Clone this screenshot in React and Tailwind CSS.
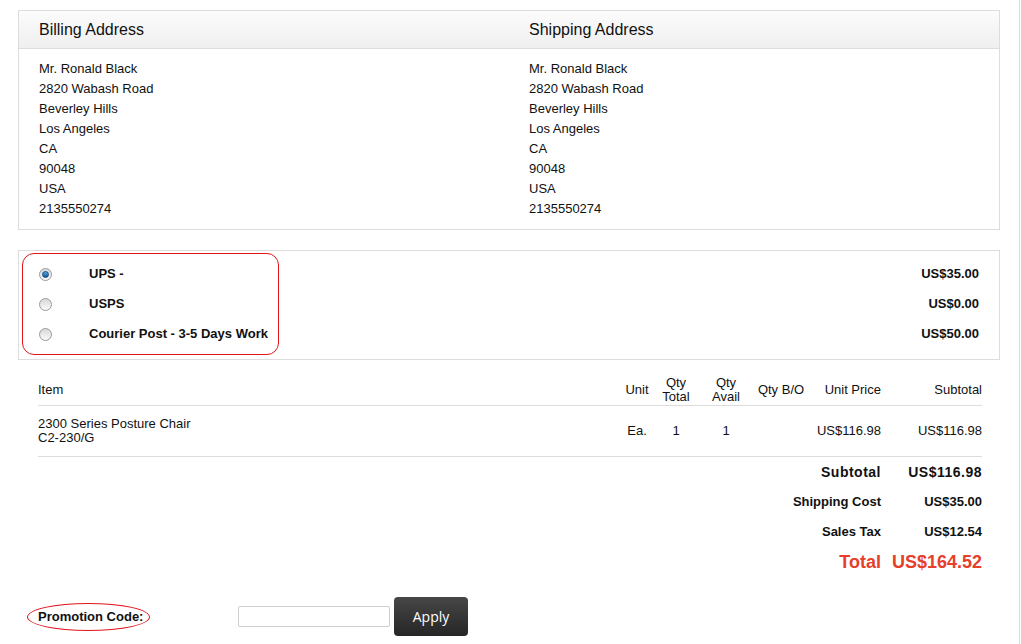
import React from "react";

const address = [
  "Mr. Ronald Black",
  "2820 Wabash Road",
  "Beverley Hills",
  "Los Angeles",
  "CA",
  "90048",
  "USA",
  "2135550274",
];

const options = [
  { label: "UPS -", price: "US$35.00", checked: true },
  { label: "USPS", price: "US$0.00" },
  { label: "Courier Post - 3-5 Days Work", price: "US$50.00" },
];

function Radio({ checked }) {
  return (
    <span className="w-[13px] h-[13px] rounded-full border border-[#9a9a9a] bg-gradient-to-b from-[#d8d8d8] to-[#fafafa] flex items-center justify-center">
      {checked && (
        <span className="w-[7px] h-[7px] rounded-full bg-gradient-to-b from-[#5aa6e0] to-[#0e5a9c] border border-[#0b4a80]" />
      )}
    </span>
  );
}

export default function App() {
  return (
    <div className="w-[1020px] min-h-[644px] border-r border-[#dcdcdc] bg-white pl-[18px] pt-[10px] font-['Liberation_Sans',Arial,sans-serif] text-[13px] text-[#111]">
      {/* Addresses */}
      <div className="w-[982px] border border-[#dddddd]">
        <div className="grid grid-cols-2 h-[38px] items-center border-b border-[#dddddd] bg-gradient-to-b from-[#fcfcfc] to-[#efefef] text-[16px]">
          <div className="px-5">Billing Address</div>
          <div className="px-5">Shipping Address</div>
        </div>
        <div className="grid grid-cols-2 pt-[10px] pb-[10px] leading-[20px]">
          {[0, 1].map((c) => (
            <div key={c} className="px-5">
              {address.map((l) => (
                <div key={l}>{l}</div>
              ))}
            </div>
          ))}
        </div>
      </div>

      {/* Shipping methods */}
      <div className="relative w-[982px] mt-5 border border-[#dddddd] pt-2 pb-[10px] pl-5 pr-5 font-bold">
        {options.map((o) => (
          <div key={o.label} className="flex items-center h-[30px]">
            <Radio checked={o.checked} />
            <span className="ml-[37px] flex-1">{o.label}</span>
            <span>{o.price}</span>
          </div>
        ))}
        <div className="absolute left-[3px] top-[2px] w-[257px] h-[102px] rounded-[12px] border border-[#e2141c]" />
      </div>

      {/* Items table */}
      <div className="w-[984px] pl-5 pr-[20px] mt-[15px]">
        <div className="flex items-center h-[30px] border-b border-[#dddddd] leading-[14px] box-content">
          <div className="w-[579px]">Item</div>
          <div className="w-[40px] text-center">Unit</div>
          <div className="w-[38px] text-center">Qty<br />Total</div>
          <div className="w-[62px] text-center">Qty<br />Avail</div>
          <div className="w-[48px] text-center">Qty B/O</div>
          <div className="w-[76px] text-right">Unit Price</div>
          <div className="w-[101px] text-right">Subtotal</div>
        </div>
        <div className="flex items-center h-[50px] border-b border-[#dddddd] leading-[14px] box-content">
          <div className="w-[579px]">
            <div>2300 Series Posture Chair</div>
            <div>C2-230/G</div>
          </div>
          <div className="w-[40px] text-center">Ea.</div>
          <div className="w-[38px] text-center">1</div>
          <div className="w-[62px] text-center">1</div>
          <div className="w-[48px] text-center"></div>
          <div className="w-[76px] text-right">US$116.98</div>
          <div className="w-[101px] text-right">US$116.98</div>
        </div>

        {/* Totals */}
        <div className="font-bold">
          <div className="flex items-center justify-end h-[30px] text-[14px] tracking-[0.5px]">
            <span>Subtotal</span>
            <span className="w-[101px] text-right">US$116.98</span>
          </div>
          <div className="flex items-center justify-end h-[30px]">
            <span>Shipping Cost</span>
            <span className="w-[101px] text-right">US$35.00</span>
          </div>
          <div className="flex items-center justify-end h-[30px]">
            <span>Sales Tax</span>
            <span className="w-[101px] text-right">US$12.54</span>
          </div>
          <div className="flex items-center justify-end h-[30px] text-[18px] text-[#e6402b]">
            <span>Total</span>
            <span className="w-[101px] text-right">US$164.52</span>
          </div>
        </div>

        {/* Promotion */}
        <div className="flex items-center mt-[20px] h-[39px]">
          <div className="relative w-[200px] font-bold leading-[15px]">
            <span>Promotion Code:</span>
            <div className="absolute left-[-11px] top-[-6px] w-[123px] h-[28px] rounded-[50%] border border-[#e2141c]" />
          </div>
          <input
            type="text"
            className="w-[152px] h-[21px] border border-[#cfcfcf] rounded-[2px] bg-white outline-none"
          />
          <button className="ml-[4px] w-[74px] h-[39px] rounded-[4px] bg-gradient-to-b from-[#474747] to-[#262626] text-white text-[14px] font-['Open_Sans',Arial,sans-serif]">
            Apply
          </button>
        </div>
      </div>
    </div>
  );
}
